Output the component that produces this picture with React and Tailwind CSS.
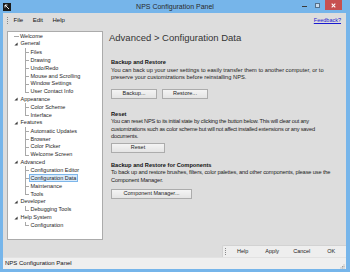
import React from 'react'

const tree = [
  {label: 'Welcome'},
  {label: 'General', children: ['Files', 'Drawing', 'Undo/Redo', 'Mouse and Scrolling', 'Window Settings', 'User Contact Info']},
  {label: 'Appearance', children: ['Color Scheme', 'Interface']},
  {label: 'Features', children: ['Automatic Updates', 'Browser', 'Color Picker', 'Welcome Screen']},
  {label: 'Advanced', children: ['Configuration Editor', 'Configuration Data', 'Maintenance', 'Tools']},
  {label: 'Developer', children: ['Debugging Tools']},
  {label: 'Help System', children: ['Configuration']},
]

const selected = 'Configuration Data'

// small filled triangle, the "expanded" glyph of the tree
function Expander() {
  return (
    <svg width="4" height="4" viewBox="0 0 4 4" className="shrink-0">
      <path d="M3.6 0.4 L3.6 3.6 L0.4 3.6 Z" fill="#3a3a3a" />
    </svg>
  )
}

function AppIcon() {
  return (
    <svg width="8" height="8" viewBox="0 0 8 8">
      <rect x="0" y="0" width="8" height="8" fill="#1b1b1b" />
      <path d="M2 2 L6 6 M2 2 L2 4.5 M2 2 L4.5 2" stroke="#fff" strokeWidth="0.9" />
    </svg>
  )
}

function RootRow({label, children}) {
  return (
    <div className="flex items-center h-[7.875px] pl-[5.5px]">
      {children ? (
        <Expander />
      ) : (
        <span className="w-[5px] h-px bg-[#a8a8a8] shrink-0" />
      )}
      <span className={children ? 'ml-[3px]' : 'ml-[1.5px]'}>{label}</span>
    </div>
  )
}

function ChildRow({label, last}) {
  const isSel = label === selected
  return (
    <div className="relative flex items-center h-[7.875px] pl-[20.5px]">
      <span className={'absolute left-[17px] top-0 w-px bg-[#a8a8a8] ' + (last ? 'h-1/2' : 'h-full')} />
      <span className="absolute left-[17px] top-1/2 w-[4px] h-px bg-[#a8a8a8]" />
      <span
        className={
          'px-[1px] leading-[6.5px] h-[7.5px] flex items-center border ' +
          (isSel ? 'bg-[#d9ebfb] border-[#7db6ea]' : 'border-transparent')
        }
      >
        {label}
      </span>
    </div>
  )
}

function Btn({w, children}) {
  return (
    <div
      className={
        'flex items-center justify-center h-[10px] border border-[#acacac] bg-gradient-to-b from-[#f4f4f4] to-[#e4e4e4] text-[5.5px] text-[#222] ' +
        w
      }
    >
      {children}
    </div>
  )
}

export default function App() {
  return (
    <div className="w-[350px] h-[272px] bg-[#76b5ea] flex flex-col font-['Liberation_Sans',Arial,sans-serif] overflow-hidden">
      {/* title bar */}
      <div className="h-[13px] grid grid-cols-[1fr_auto_1fr] items-center shrink-0">
        <div className="pl-[3px] flex items-center">
          <AppIcon />
        </div>
        <div className="text-[7px] text-[#2a2a2a] leading-[13px]">NPS Configuration Panel</div>
        <div className="flex justify-end items-start h-full pr-[8px]">
          <div className="w-[5px] h-[1.5px] bg-[#3a3a3a] mt-[5.5px]" />
          <div className="w-[5px] h-[4.5px] border border-[#55708a] bg-[#c9dcee] mt-[3px] ml-[8px]" />
          <div className="w-[17px] h-[10px] bg-[#c75050] ml-[5px] flex items-center justify-center">
            <svg width="5" height="5" viewBox="0 0 5 5">
              <path d="M0.7 0.7 L4.3 4.3 M4.3 0.7 L0.7 4.3" stroke="#fff" strokeWidth="1.1" />
            </svg>
          </div>
        </div>
      </div>

      {/* window body */}
      <div className="flex-1 flex flex-col ml-[3px] mr-[4px] mb-[3px] bg-[#dddddd] min-h-0">
        {/* menu bar */}
        <div className="h-[14px] flex items-center text-[6px] text-[#111] shrink-0">
          <span className="ml-[3.5px] w-px h-[7px] border-l border-dotted border-[#8a8a8a]" />
          <span className="ml-[6px]">File</span>
          <span className="ml-[9.5px]">Edit</span>
          <span className="ml-[9.5px]">Help</span>
          <span className="ml-auto mr-[5px] text-[5.5px] text-[#1a1ad0] underline">Feedback?</span>
        </div>

        {/* main area */}
        <div className="flex-1 flex min-h-0">
          {/* tree */}
          <div className="pl-[4px] pt-[4px] pb-[17px] shrink-0">
            <div className="w-[96px] h-full bg-white border border-[#ababab] pt-[0.5px] text-[5.5px] text-[#1e1e1e] leading-[7.875px] whitespace-nowrap">
              {tree.map((n) => (
                <React.Fragment key={n.label}>
                  <RootRow label={n.label}>{n.children}</RootRow>
                  {n.children &&
                    n.children.map((c, i) => (
                      <ChildRow key={c} label={c} last={i === n.children.length - 1} />
                    ))}
                </React.Fragment>
              ))}
            </div>
          </div>

          {/* content */}
          <div className="flex-1 flex flex-col pl-[6px] min-w-0">
            <div className="mt-[5px] h-[12px] leading-[12px] text-[9.5px] text-[#333]">
              Advanced &gt; Configuration Data
            </div>

            <div className="pl-[2px] text-[5.7px] leading-[7.5px] text-[#222] whitespace-nowrap">
              <div className="mt-[15px] font-bold text-[#111]">Backup and Restore</div>
              <div>
                You can back up your user settings to easily transfer them to another computer, or to
                <br />
                preserve your customizations before reinstalling NPS.
              </div>
              <div className="flex gap-[5px] mt-[7px]">
                <Btn w="w-[46px]">Backup...</Btn>
                <Btn w="w-[46px]">Restore...</Btn>
              </div>

              <div className="mt-[12px] font-bold text-[#111]">Reset</div>
              <div className="tracking-[-0.22px]">
                You can reset NPS to its initial state by clicking the button below. This will clear out any
                <br />
                customizations such as color scheme but will not affect installed extensions or any saved
                <br />
                documents.
              </div>
              <div className="mt-[2px]">
                <Btn w="w-[54px]">Reset</Btn>
              </div>

              <div className="mt-[9px] font-bold text-[#111]">Backup and Restore for Components</div>
              <div className="tracking-[-0.15px]">
                To back up and restore brushes, filters, color palettes, and other components, please use the
                <br />
                Component Manager.
              </div>
              <div className="mt-[5px]">
                <Btn w="w-[81px]">Component Manager...</Btn>
              </div>
            </div>

            {/* bottom toolstrip */}
            <div className="mt-auto self-end h-[12px] w-[124px] flex items-center bg-[#eeeeee] border-t border-l border-[#d2d2d2] rounded-tl-[2px] text-[5.5px] text-[#222]">
              <span className="ml-[1.5px] w-px h-[7px] border-l border-dotted border-[#8a8a8a]" />
              <span className="ml-[2.5px] w-[29.5px] text-center">Help</span>
              <span className="w-[29.5px] text-center">Apply</span>
              <span className="w-[29.5px] text-center">Cancel</span>
              <span className="w-[29.5px] text-center">OK</span>
            </div>
          </div>
        </div>

        {/* status bar */}
        <div className="h-[12px] shrink-0 flex items-center bg-[#efefef] border-t border-[#e2e2e2] text-[6px] text-[#111] pl-[2px]">
          <span>NPS Configuration Panel</span>
          <svg width="5" height="5" viewBox="0 0 5 5" className="ml-auto mr-[1px] mt-[5px]">
            <rect x="3.5" y="0.5" width="1" height="1" fill="#a0a0a0" />
            <rect x="2" y="2" width="1" height="1" fill="#a0a0a0" />
            <rect x="3.5" y="2" width="1" height="1" fill="#a0a0a0" />
            <rect x="0.5" y="3.5" width="1" height="1" fill="#a0a0a0" />
            <rect x="2" y="3.5" width="1" height="1" fill="#a0a0a0" />
            <rect x="3.5" y="3.5" width="1" height="1" fill="#a0a0a0" />
          </svg>
        </div>
      </div>
    </div>
  )
}
